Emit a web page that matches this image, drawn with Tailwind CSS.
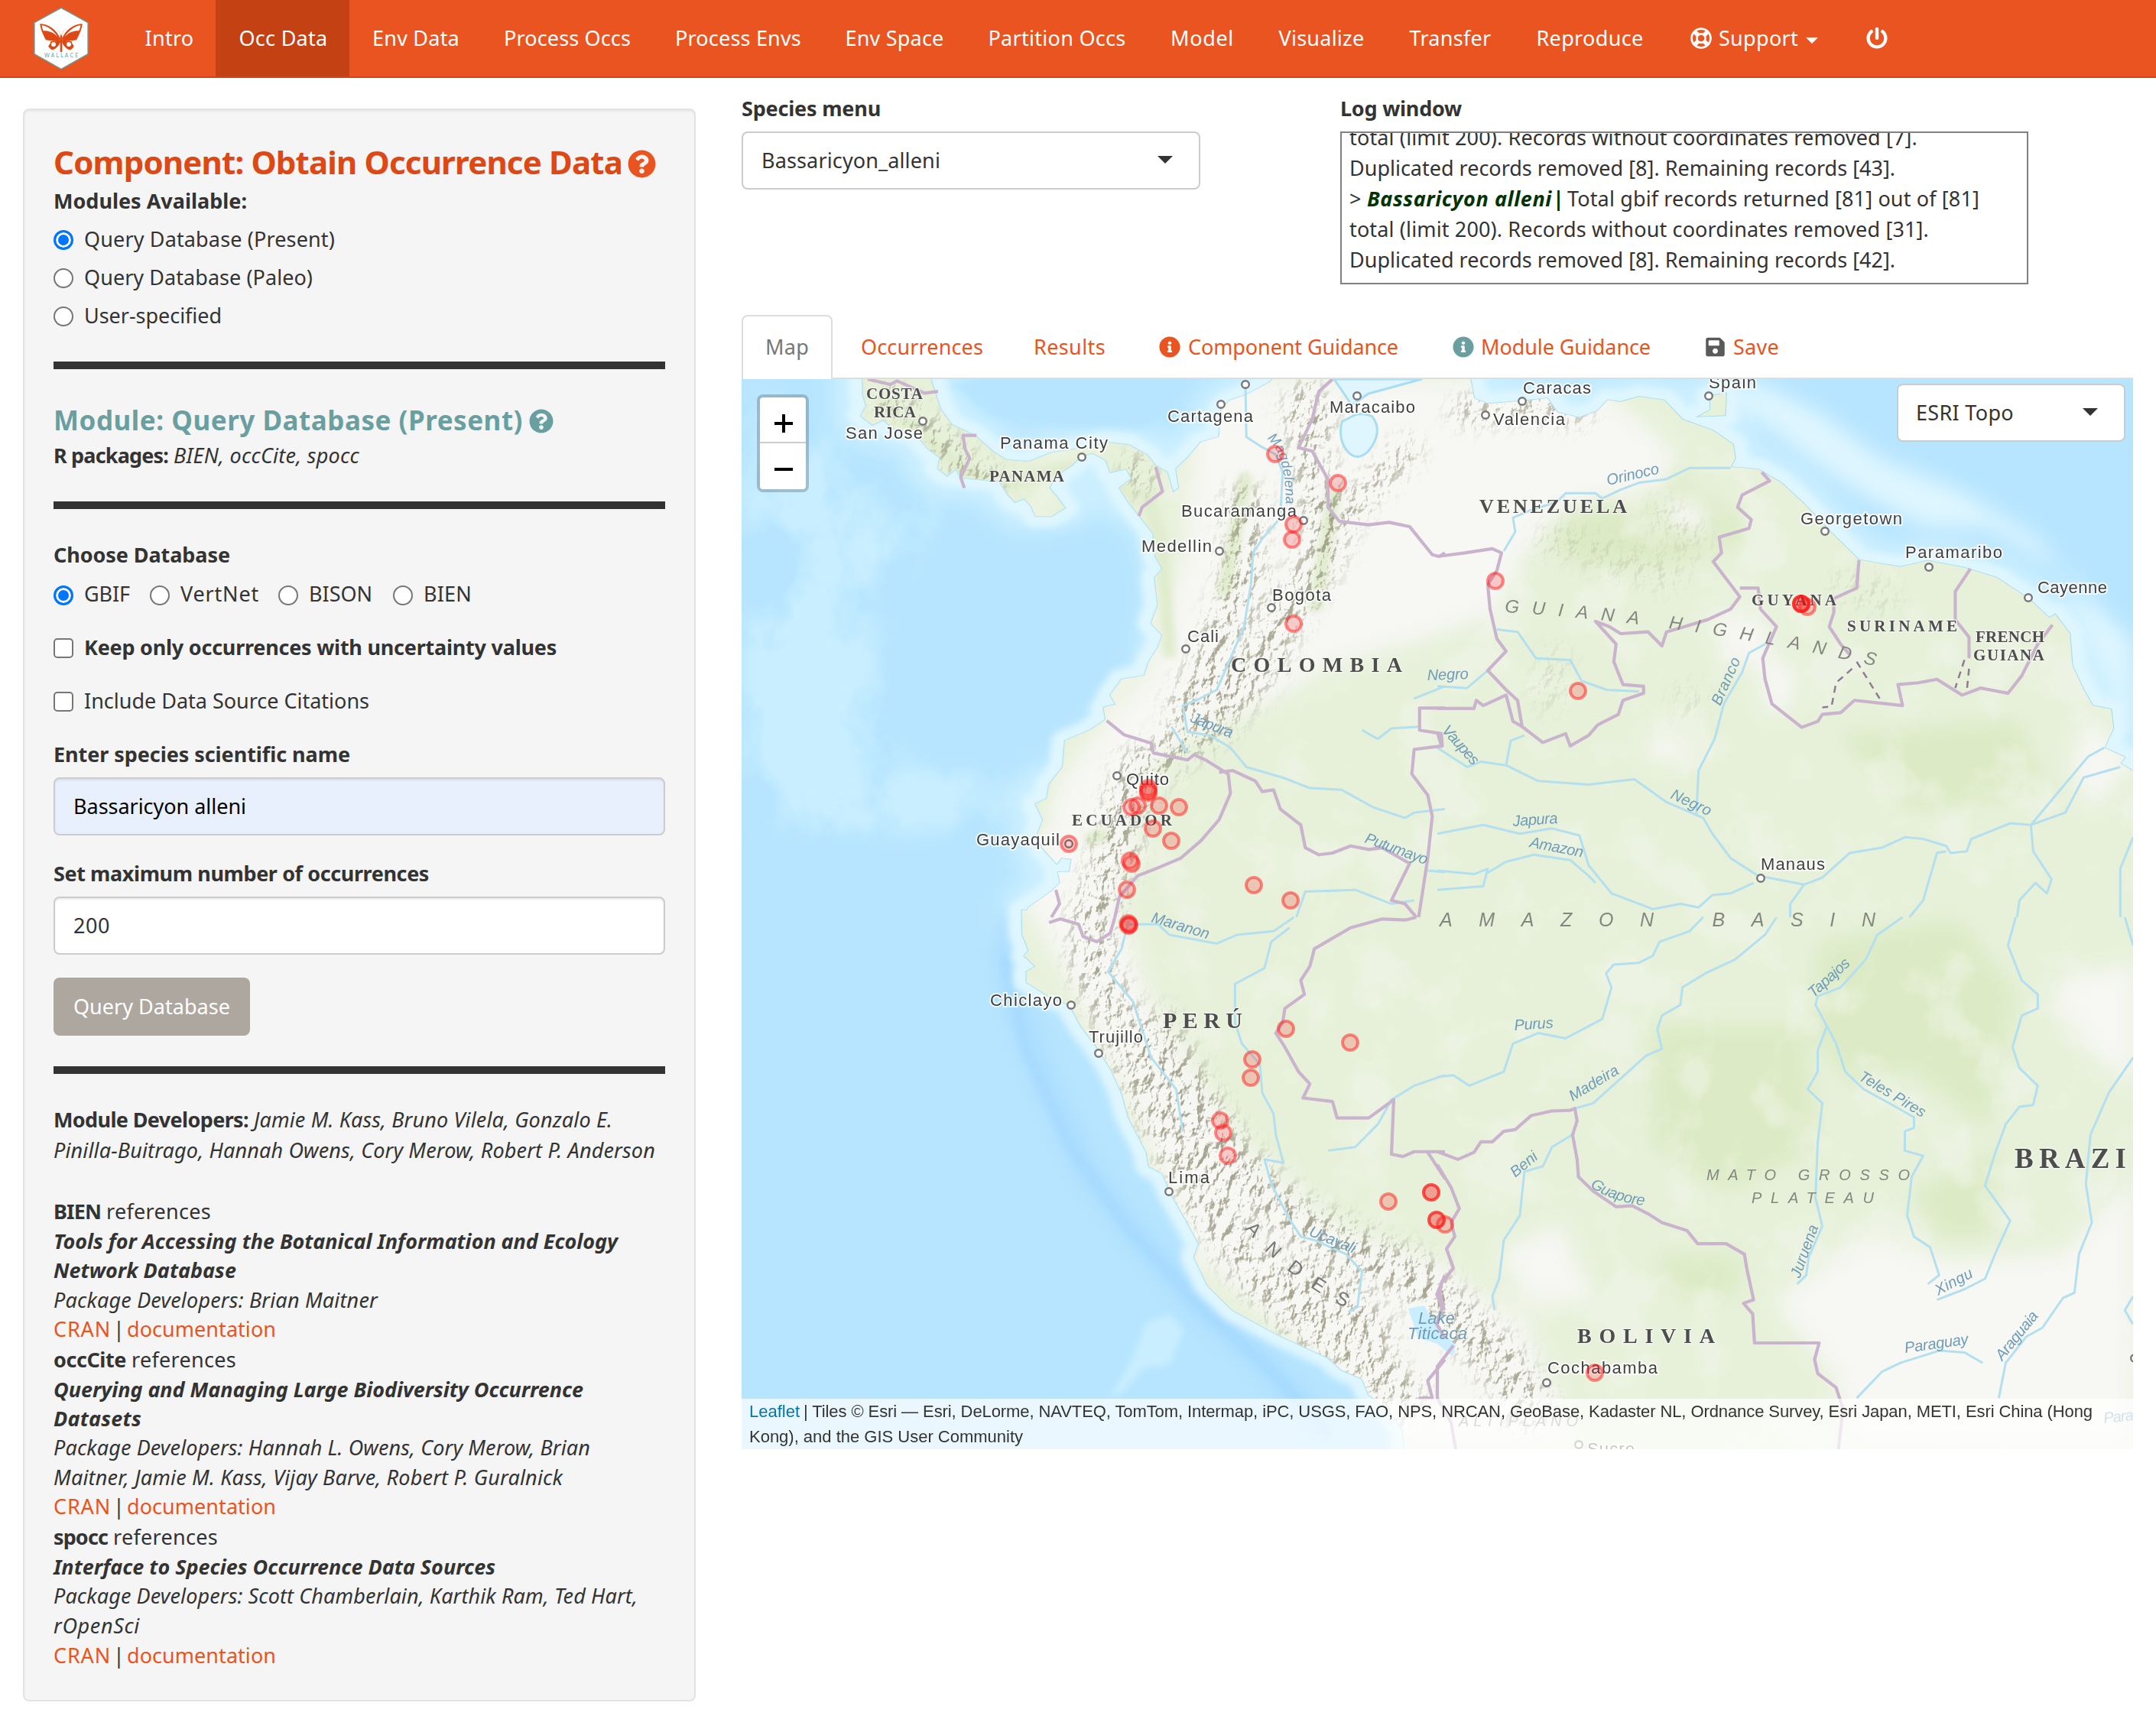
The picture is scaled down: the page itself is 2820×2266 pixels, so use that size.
<!DOCTYPE html>
<html lang="en">
<head>
<meta charset="utf-8">
<title>Wallace</title>
<script src="https://cdn.jsdelivr.net/npm/@tailwindcss/browser@4"></script>
</head>
<body class="w-[2820px] h-[2266px] overflow-hidden bg-white text-[#333] text-[27px] leading-[40px] font-['Noto_Sans',sans-serif]">
<svg class="hidden">
  <symbol id="question" viewBox="0 0 512 512"><path fill="currentColor" d="M504 256c0 136.997-111.043 248-248 248S8 392.997 8 256C8 119.083 119.043 8 256 8s248 111.083 248 248zM262.655 90c-54.497 0-89.255 22.957-116.549 63.758-3.536 5.286-2.353 12.415 2.715 16.258l34.699 26.31c5.205 3.947 12.621 3.008 16.665-2.122 17.864-22.658 30.113-35.797 57.303-35.797 20.429 0 45.698 13.148 45.698 32.958 0 14.976-12.363 22.667-32.534 33.976C247.128 238.528 216 254.941 216 296v4c0 6.627 5.373 12 12 12h56c6.627 0 12-5.373 12-12v-1.333c0-28.462 83.186-29.647 83.186-106.667 0-58.002-60.165-102-116.531-102zM256 338c-25.365 0-46 20.635-46 46 0 25.364 20.635 46 46 46s46-20.636 46-46c0-25.365-20.635-46-46-46z"/></symbol>
  <symbol id="info" viewBox="0 0 512 512"><path fill="currentColor" d="M256 8C119.043 8 8 119.083 8 256c0 136.997 111.043 248 248 248s248-111.003 248-248C504 119.083 392.957 8 256 8zm0 110c23.196 0 42 18.804 42 42s-18.804 42-42 42-42-18.804-42-42 18.804-42 42-42zm56 254c0 6.627-5.373 12-12 12h-88c-6.627 0-12-5.373-12-12v-24c0-6.627 5.373-12 12-12h12v-64h-12c-6.627 0-12-5.373-12-12v-24c0-6.627 5.373-12 12-12h64c6.627 0 12 5.373 12 12v100h12c6.627 0 12 5.373 12 12v24z"/></symbol>
</svg>

<header class="h-[102px] flex bg-[#E95420] border-b-2 border-[#d34615] text-white leading-[100px]">
  <svg class="ml-[30px] w-[100px] h-[100px] shrink-0" viewBox="0 0 300 300">
    <path d="M150 31L255 89V212L150 271L45 212V89Z" fill="#fff" stroke="#6a9fa1" stroke-width="4"/>
    <path d="M147 152C132 116 100 94 67 93C68 112 77 132 90 157C110 161 130 160 146 158ZM153 152C168 116 200 94 233 93C232 112 223 132 210 157C190 161 170 160 154 158Z" fill="#dd4814"/>
    <path d="M74 99C102 104 124 124 137 146C120 126 102 121 80 121C77 113 74 106 74 99ZM226 99C198 104 176 124 163 146C180 126 198 121 220 121C223 113 226 106 226 99Z" fill="#fff"/>
    <path d="M147 159C130 159 112 160 107 164C112 170 99 176 100 184C106 188 109 196 116 196C130 192 141 180 147 164ZM153 159C170 159 188 160 193 164C188 170 201 176 200 184C194 188 191 196 184 196C170 192 159 180 153 164Z" fill="#dd4814"/>
    <circle cx="120" cy="174" r="9" fill="#fff"/><circle cx="180" cy="174" r="9" fill="#fff"/>
    <path d="M150 140V201" stroke="#dd4814" stroke-width="8" stroke-linecap="round"/>
    <path d="M149 140Q145 120 130 112M151 140Q155 120 170 112" stroke="#f3c5b2" stroke-width="2" fill="none"/>
    <text x="84" y="224" font-size="20" textLength="132" font-family="Lato, sans-serif" fill="#6a9fa1">WALLACE</text>
  </svg>
  <nav class="ml-[29px] flex h-[100px] whitespace-nowrap text-center">
    <a class="w-[123px] pl-[2px]"><span data-w="64">Intro</span></a>
    <a class="w-[175px] pl-[2px] bg-[#c34113]"><span data-w="116">Occ Data</span></a>
    <a class="w-[172px] pl-[2px]"><span data-w="114">Env Data</span></a>
    <a class="w-[224px] pl-[2px]"><span data-w="166">Process Occs</span></a>
    <a class="w-[223px] pl-[2px]"><span data-w="165">Process Envs</span></a>
    <a class="w-[186px] pl-[2px]"><span data-w="129">Env Space</span></a>
    <a class="w-[239px] pl-[2px]"><span data-w="180">Partition Occs</span></a>
    <a class="w-[141px] pl-[2px]"><span data-w="83">Model</span></a>
    <a class="w-[171px] pl-[2px]"><span data-w="112">Visualize</span></a>
    <a class="w-[166px] pl-[2px]"><span data-w="107">Transfer</span></a>
    <a class="w-[199px] pl-[2px]"><span data-w="140">Reproduce</span></a>
    <a class="pl-[33px] w-[232px] flex items-center">
      <svg class="w-7 h-7 shrink-0" viewBox="0 0 28 28" fill="none" stroke="#fff"><circle cx="14" cy="14" r="12.4" stroke-width="2.8"/><circle cx="14" cy="14" r="5.6" stroke-width="2.6"/><path d="M5 5L10 10M23 5L18 10M5 23L10 18M23 23L18 18" stroke-width="5.5"/></svg>
      <span class="ml-[9px]" data-w="104">Support</span>
      <svg class="ml-[10px] mt-[6px] w-4 h-2 shrink-0" viewBox="0 0 16 8"><path d="M0 0H16L8 8Z" fill="#fff"/></svg>
    </a>
    <a class="pl-[31px] flex items-center"><svg class="w-7 h-7" viewBox="0 0 512 512"><path fill="#fff" d="M400 54.1c63 45 104 118.6 104 201.9 0 136.8-110.8 247.7-247.5 248C120 504.3 8.2 393 8 256.4 7.9 173.1 48.9 99.3 111.8 54.2c11.7-8.3 28-4.8 35 7.7L162.6 90c5.9 10.5 3.1 23.8-6.6 31-41.5 30.8-68 79.6-68 134.9-.1 92.3 74.5 168.1 168 168.1 91.6 0 168.6-74.2 168-169.1-.3-51.8-24.7-101.8-68.1-134-9.7-7.2-12.4-20.5-6.5-30.9l15.8-28.1c7-12.4 23.2-16.1 34.8-7.8zM296 264V24c0-13.3-10.7-24-24-24h-32c-13.3 0-24 10.7-24 24v240c0 13.3 10.7 24 24 24h32c13.3 0 24-10.7 24-24z"/></svg></a>
  </nav>
</header>

<div class="flex">
<aside class="ml-[30px] mt-10 w-[880px] h-[2084px] shrink-0 border-2 border-[#e3e3e3] rounded-[8px] bg-[#f5f5f5] shadow-[inset_0_2px_2px_rgba(0,0,0,0.05)] pt-[44px] px-[38px] whitespace-nowrap">
  <h1 class="flex items-center h-12 leading-[48px] text-[42px] font-bold text-[#dd4814]"><span data-w="744">Component: Obtain Occurrence Data</span><svg class="ml-[7px] mt-1 w-[37px] h-[37px] shrink-0 text-[#E95420]"><use href="#question"/></svg></h1>
  <div class="mt-[7px] font-bold"><span data-w="253">Modules Available:</span></div>
  <div class="mt-[10px] flex flex-col gap-[10px]">
    <label class="flex items-center gap-[14px]"><input type="radio" class="appearance-none shrink-0 mt-[2px] size-[26px] rounded-full border-[3px] border-[#0075ff] bg-[#0075ff] shadow-[inset_0_0_0_3px_white]"><span data-w="328">Query Database (Present)</span></label>
    <label class="flex items-center gap-[14px]"><input type="radio" class="appearance-none shrink-0 mt-[2px] size-[26px] rounded-full border-2 border-[#767676] bg-white"><span data-w="299">Query Database (Paleo)</span></label>
    <label class="flex items-center gap-[14px]"><input type="radio" class="appearance-none shrink-0 mt-[2px] size-[26px] rounded-full border-2 border-[#767676] bg-white"><span data-w="180">User-specified</span></label>
  </div>
  <div class="mt-[40px] h-[10px] bg-[#333]"></div>
  <h2 class="mt-[47px] flex items-center h-10 text-[35px] font-bold text-[#6a9fa1]"><span data-w="614">Module: Query Database (Present)</span><svg class="ml-[8px] mt-[2px] w-8 h-8 shrink-0"><use href="#question"/></svg></h2>
  <div class="mt-[6px] flex gap-[7px]"><b><span data-w="150">R packages:</span></b><i><span data-w="243">BIEN, occCite, spocc</span></i></div>
  <div class="mt-[40px] h-[10px] bg-[#333]"></div>
  <div class="mt-[40px] font-bold"><span data-w="231">Choose Database</span></div>
  <div class="mt-[11px] flex">
    <label class="flex items-center gap-[14px] w-[126px]"><input type="radio" class="appearance-none shrink-0 mt-1 size-[26px] rounded-full border-[3px] border-[#0075ff] bg-[#0075ff] shadow-[inset_0_0_0_3px_white]"><span data-w="60">GBIF</span></label>
    <label class="flex items-center gap-[14px] w-[168px]"><input type="radio" class="appearance-none shrink-0 mt-1 size-[26px] rounded-full border-2 border-[#767676] bg-white"><span data-w="103">VertNet</span></label>
    <label class="flex items-center gap-[14px] w-[150px]"><input type="radio" class="appearance-none shrink-0 mt-1 size-[26px] rounded-full border-2 border-[#767676] bg-white"><span data-w="83">BISON</span></label>
    <label class="flex items-center gap-[14px]"><input type="radio" class="appearance-none shrink-0 mt-1 size-[26px] rounded-full border-2 border-[#767676] bg-white"><span data-w="63">BIEN</span></label>
  </div>
  <label class="mt-[30px] flex items-center gap-[14px] font-bold"><input type="checkbox" class="appearance-none shrink-0 mt-[2px] size-[26px] rounded-[5px] border-2 border-[#767676] bg-white"><span data-w="618">Keep only occurrences with uncertainty values</span></label>
  <label class="mt-[30px] flex items-center gap-[14px]"><input type="checkbox" class="appearance-none shrink-0 mt-[2px] size-[26px] rounded-[5px] border-2 border-[#767676] bg-white"><span data-w="373">Include Data Source Citations</span></label>
  <div class="mt-[30px] font-bold"><span data-w="388">Enter species scientific name</span></div>
  <div class="mt-[10px] h-[76px] border-2 border-[#ccc] rounded-[8px] bg-[#e8f0fe] shadow-[inset_0_2px_2px_rgba(0,0,0,0.075)] pl-6 leading-[72px] text-black"><span data-w="226">Bassaricyon alleni</span></div>
  <div class="mt-[30px] font-bold"><span data-w="491">Set maximum number of occurrences</span></div>
  <div class="mt-[10px] h-[76px] border-2 border-[#ccc] rounded-[8px] bg-white shadow-[inset_0_2px_2px_rgba(0,0,0,0.075)] pl-6 leading-[72px]"><span data-w="48">200</span></div>
  <div class="mt-[30px] w-[257px] h-[76px] rounded-[8px] bg-[#aea79f] pl-[26px] leading-[76px] text-white"><span data-w="205">Query Database</span></div>
  <div class="mt-10 h-[10px] bg-[#333]"></div>
  <div class="mt-10 flex gap-[7px]"><b><span data-w="255">Module Developers:</span></b><i><span data-w="469">Jamie M. Kass, Bruno Vilela, Gonzalo E.</span></i></div>
  <div><i><span data-w="787">Pinilla-Buitrago, Hannah Owens, Cory Merow, Robert P. Anderson</span></i></div>

  <div class="mt-10 flex gap-[7px]"><b><span data-w="62">BIEN</span></b><span data-w="137">references</span></div>
  <div class="leading-[38.4px]">
    <div class="font-bold italic"><span data-w="738">Tools for Accessing the Botanical Information and Ecology</span></div>
    <div class="font-bold italic"><span data-w="239">Network Database</span></div>
    <div class="italic"><span data-w="424">Package Developers: Brian Maitner</span></div>
    <div class="flex"><a class="w-[78px] text-[#E95420]"><span data-w="75">CRAN</span></a><span class="w-[18px]">|</span><a class="text-[#E95420]"><span data-w="195">documentation</span></a></div>
  </div>
  <div class="flex gap-[7px]"><b><span data-w="95">occCite</span></b><span data-w="137">references</span></div>
  <div class="leading-[38.4px]">
    <div class="font-bold italic"><span data-w="693">Querying and Managing Large Biodiversity Occurrence</span></div>
    <div class="font-bold italic"><span data-w="115">Datasets</span></div>
    <div class="italic"><span data-w="702">Package Developers: Hannah L. Owens, Cory Merow, Brian</span></div>
    <div class="italic"><span data-w="666">Maitner, Jamie M. Kass, Vijay Barve, Robert P. Guralnick</span></div>
    <div class="flex"><a class="w-[78px] text-[#E95420]"><span data-w="75">CRAN</span></a><span class="w-[18px]">|</span><a class="text-[#E95420]"><span data-w="195">documentation</span></a></div>
  </div>
  <div class="flex gap-[7px]"><b><span data-w="71">spocc</span></b><span data-w="137">references</span></div>
  <div class="leading-[38.7px]">
    <div class="font-bold italic"><span data-w="578">Interface to Species Occurrence Data Sources</span></div>
    <div class="italic"><span data-w="764">Package Developers: Scott Chamberlain, Karthik Ram, Ted Hart,</span></div>
    <div class="italic"><span data-w="113">rOpenSci</span></div>
    <div class="flex"><a class="w-[78px] text-[#E95420]"><span data-w="75">CRAN</span></a><span class="w-[18px]">|</span><a class="text-[#E95420]"><span data-w="195">documentation</span></a></div>
  </div>
</aside>

<main class="ml-[60px] w-[1820px] whitespace-nowrap">
  <div class="flex h-[310px] pt-[20px]">
    <div class="w-[783px]">
      <div class="font-bold"><span data-w="182">Species menu</span></div>
      <div class="mt-[10px] w-[600px] h-[76px] flex justify-between border-2 border-[#ccc] rounded-[8px] pl-6 pr-[34px] leading-[72px]"><span data-w="234">Bassaricyon_alleni</span><svg class="mt-[30px] w-5 h-[10px]" viewBox="0 0 20 10"><path d="M0 0H20L10 10Z" fill="#333"/></svg></div>
    </div>
    <div>
      <div class="font-bold"><span data-w="159">Log window</span></div>
      <div class="mt-[10px] w-[900px] h-[200px] overflow-hidden border-2 border-[#808080] pl-[10px]">
        <div class="-mt-[14px]"><span data-w="743">total (limit 200). Records without coordinates removed [7].</span></div>
        <div><span data-w="714">Duplicated records removed [8]. Remaining records [43].</span></div>
        <div class="flex"><span class="w-[23px]" data-w="16">&gt;</span><b class="text-[#003300] flex"><i class="w-[243px]"><span data-w="242">Bassaricyon alleni</span></i><span class="w-[19px]">|</span></b><span data-w="539">Total gbif records returned [81] out of [81]</span></div>
        <div><span data-w="758">total (limit 200). Records without coordinates removed [31].</span></div>
        <div><span data-w="714">Duplicated records removed [8]. Remaining records [42].</span></div>
      </div>
    </div>
  </div>
  <div class="flex h-[84px] border-b-2 border-[#ddd] text-[#E95420] leading-[83px]">
    <div class="w-[119px] h-[84px] border-2 border-b-0 border-[#ddd] rounded-t-[8px] bg-white text-[#777] pl-[29px] leading-[79px]"><span data-w="57">Map</span></div>
    <div class="pl-[37px]"><span data-w="160">Occurrences</span></div>
    <div class="pl-[66px]"><span data-w="94">Results</span></div>
    <div class="pl-[70px] flex"><svg class="mt-[28px] w-7 h-7"><use href="#info"/></svg><span class="ml-[10px]" data-w="275">Component Guidance</span></div>
    <div class="pl-[71px] flex"><svg class="mt-[28px] w-7 h-7 text-[#6a9fa1]"><use href="#info"/></svg><span class="ml-[9px]" data-w="222">Module Guidance</span></div>
    <div class="pl-[72px] flex"><svg class="mt-[28px] w-[25px] h-7" viewBox="0 0 448 512"><path fill="#5a5a5a" d="M433.941 129.941l-83.882-83.882A48 48 0 0 0 316.118 32H48C21.49 32 0 53.49 0 80v352c0 26.51 21.49 48 48 48h352c26.51 0 48-21.49 48-48V163.882a48 48 0 0 0-14.059-33.941zM224 416c-35.346 0-64-28.654-64-64 0-35.346 28.654-64 64-64s64 28.654 64 64c0 35.346-28.654 64-64 64zm96-304.52V212c0 6.627-5.373 12-12 12H76c-6.627 0-12-5.373-12-12V108c0-6.627 5.373-12 12-12h228.52c3.183 0 6.235 1.264 8.485 3.515l3.48 3.48A11.996 11.996 0 0 1 320 111.48z"/></svg><span class="ml-[11px]" data-w="60">Save</span></div>
  </div>

  <div class="relative w-[1820px] h-[1400px] overflow-hidden">
    <svg class="block w-[1820px] h-[1400px]" viewBox="970 496 1820 1400">
      <defs>
        <path id="landNW" transform="translate(960 480) scale(.5931 .4592)" d="M283 20L285 80L292 110L280 140L305 165L330 150L350 175L400 190L430 235L455 258L450 290L470 310L490 290L500 315L585 325L605 365L620 385L640 375L655 395L665 425L700 425L730 402L712 370L695 345L710 310L745 280L765 255L790 245L820 265L830 300L865 290L878 318L850 345L870 385L895 425L925 475L930 540L945 575L928 600L935 680L920 730L945 765L935 800L915 840L905 880L855 890L830 935L842 962L815 970L820 1005L785 1035L730 1065L725 1140L695 1190L690 1230L665 1245L682 1290L670 1330L680 1370L712 1415L722 1398L745 1402L740 1440L715 1440L720 1470L700 1495L650 1540L635 1580L1600 1580V20H1200L1180 45L1130 80L1095 95L1075 120L1070 200L1030 215L1000 260L975 290L982 345L968 358L955 300L930 282L910 250L870 222L820 215L770 230L700 245L650 270L600 265L570 240L530 195L480 165L455 120L440 60L430 20Z"/>
        <path id="landSW" transform="translate(960 1200) scale(.5931 .4592)" d="M635 -20L636 50L650 95L640 110L665 140L645 155L645 185L700 230L740 250L765 310L800 370L830 430L855 500L870 570L910 670L915 710L945 730L965 790L1000 870L1025 930L1015 970L1045 1050L1100 1120L1200 1190L1310 1255L1340 1290L1385 1315L1400 1360L1440 1400L1475 1460L1480 1530L1600 1530V-20Z"/>
        <path id="landNE" transform="translate(1880 480) scale(.5995 .4592)" d="M-20 20H70L80 90L110 105L180 98L240 90L262 130L310 145L350 125L372 95L400 100L440 85L495 95L535 150L600 180L645 220L650 260L640 285L700 292L750 330L800 390L850 460L920 550L1010 570L1070 552L1150 572L1220 600L1290 660L1335 715L1348 705L1380 760L1385 850L1410 920L1430 965L1470 975L1475 1030L1455 1085L1500 1112L1490 1130L1530 1160V1600H-20ZM595 82L630 75L628 138L570 141L596 122Z"/>
        <path id="landSE" transform="translate(1880 1200) scale(.5995 .4592)" d="M-20 -20H1540V1540H-20Z"/>
        <clipPath id="land"><use href="#landNW"/><use href="#landSW"/><use href="#landNE"/><use href="#landSE"/></clipPath>
        <filter id="b6" x="-20%" y="-20%" width="140%" height="140%"><feGaussianBlur stdDeviation="5"/></filter>
        <filter id="b14" x="-20%" y="-20%" width="140%" height="140%"><feGaussianBlur stdDeviation="14"/></filter>
        <filter id="relief" x="0" y="0" width="100%" height="100%" color-interpolation-filters="sRGB">
          <feTurbulence type="fractalNoise" baseFrequency=".07 .05" numOctaves="4" seed="8"/>
          <feDiffuseLighting surfaceScale="12" lighting-color="#fff"><feDistantLight azimuth="225" elevation="50"/></feDiffuseLighting>
          <feColorMatrix values="0 0 0 0 .55  0 0 0 0 .54  0 0 0 0 .44  -2 0 0 0 1.1"/>
        </filter>
        <filter id="mottle" x="0" y="0" width="100%" height="100%" color-interpolation-filters="sRGB">
          <feTurbulence type="fractalNoise" baseFrequency=".012" numOctaves="5" seed="3"/>
          <feColorMatrix values="0 0 0 0 .97  0 0 0 0 .97  0 0 0 0 .95  5 0 0 0 -2.65"/>
        </filter>
        <filter id="seabed" x="0" y="0" width="100%" height="100%" color-interpolation-filters="sRGB">
          <feTurbulence type="fractalNoise" baseFrequency=".008 .006" numOctaves="5" seed="21"/>
          <feColorMatrix values="0 0 0 0 .79  0 0 0 0 .935  0 0 0 0 1  5 0 0 0 -1.8"/>
        </filter>
        <mask id="shelf" maskUnits="userSpaceOnUse" x="970" y="496" width="1820" height="1400"><path d="M970 500L1100 560L1240 640L1200 720L1160 840L1180 1000L1330 1020L1300 1080L1080 1100L970 1060Z" fill="#fff" filter="url(#b14)"/></mask>
        <mask id="ranges" maskUnits="userSpaceOnUse" x="970" y="496" width="1820" height="1400">
          <g fill="none" stroke="#fff" stroke-linejoin="round" filter="url(#b14)">
            <path stroke-width="30" d="M1150 510L1190 540L1230 580L1270 615L1310 640M1480 600L1500 640"/>
            <path stroke-width="50" d="M1700 520L1720 620L1735 720L1690 790L1640 880L1580 950L1500 1000M1630 640L1625 760L1580 880L1545 940"/>
            <path stroke-width="30" d="M1745 700L1790 640L1850 580M1900 540L2010 530L2080 540M1700 500L1740 560"/>
            <path stroke-width="56" d="M1500 990L1470 1060L1455 1130L1430 1200L1430 1260L1460 1330L1500 1420L1545 1510L1590 1590L1640 1660L1720 1740L1800 1790L1850 1850"/>
            <path stroke-width="60" d="M1500 1330L1560 1440L1620 1530L1700 1600L1780 1640L1850 1670L1900 1720L1960 1780L2010 1860"/>
            <path stroke-width="50" d="M1680 1660L1760 1700L1810 1760"/>
            <path stroke="#444" stroke-width="40" d="M2010 700L2080 720L2200 760M2040 850L2020 930M2230 720L2160 660M2200 900L2215 930M2400 760L2480 790"/>
          </g>
        </mask>
      </defs>

      <rect x="970" y="496" width="1820" height="1400" fill="#b7e5ff"/>
      <g mask="url(#shelf)"><rect x="970" y="496" width="640" height="760" filter="url(#seabed)"/></g>
      <g fill="#cdf0ff" stroke="#cdf0ff" stroke-width="130" stroke-linejoin="round" filter="url(#b14)"><use href="#landNW"/><use href="#landNE"/></g>
      <path d="M1255 740L1350 700L1480 690L1500 780L1480 880L1380 1000L1290 1000L1200 980L1150 880L1170 780Z" fill="#b7e5ff" filter="url(#b14)"/>
      <path d="M2790 600L2650 560L2600 620L2540 560L2460 540L2380 540L2340 490H2790V840L2730 800L2680 720Z" fill="#b7e5ff" filter="url(#b6)"/>
      <path d="M1240 500H1500L1560 500L1500 560L1400 560L1300 545Z" fill="#b7e5ff" filter="url(#b6)"/>
      <path d="M1312 1190L1322 1290L1365 1410L1420 1530L1490 1620L1570 1710L1660 1790L1740 1880" fill="none" stroke="#a6daff" stroke-width="22" filter="url(#b14)"/>
      <path d="M1315 1250L1340 1370L1400 1500L1470 1600L1570 1710L1660 1790L1740 1880" fill="none" stroke="#a6daff" stroke-width="12" filter="url(#b6)"/>
      <g fill="#dff6ff" stroke="#dff6ff" stroke-width="60" stroke-linejoin="round" filter="url(#b6)"><use href="#landNW"/><use href="#landSW"/><use href="#landNE"/></g>
      <path d="M2380 610L2440 650L2520 690L2600 690L2700 750L2740 860L2790 960V840L2730 780L2660 700L2560 640L2460 600L2380 540L2300 500L2260 520Z" fill="#dff6ff" filter="url(#b14)"/>
      <path d="M1530 1720L1548 1740L1530 1785L1495 1790L1470 1820L1450 1830L1480 1780L1500 1730Z" fill="#c9eeff" filter="url(#b6)"/>
      <g stroke="#a9def2" stroke-width="4" fill="#e8f1dc"><use href="#landNW"/><use href="#landSW"/><use href="#landNE"/></g>

      <g clip-path="url(#land)">
        <rect x="970" y="496" width="1820" height="1400" fill="#e7f1da"/>
        <g filter="url(#b14)" fill="#dcebc6">
          <path d="M1980 660L2200 620L2300 700L2180 740L2060 740Z"/><path d="M2380 1230L2560 1200L2640 1300L2600 1480L2500 1400L2420 1420L2360 1340Z"/><path d="M2160 1340L2360 1340L2380 1500L2260 1560L2160 1500Z"/><path d="M2500 1560L2620 1500L2600 1620L2540 1620Z"/><path d="M2400 960L2640 940L2680 1040L2500 1060Z"/><path d="M2160 1640L2280 1640L2270 1700L2200 1700Z"/>
        </g>
        <rect x="970" y="496" width="1820" height="1400" filter="url(#mottle)" opacity=".4"/>
        <g filter="url(#b14)" fill="#f7f7f4" stroke="#f7f7f4">
          <path d="M1560 496H2080L2180 580L2180 640L2060 660L1990 730L1960 800L1880 830L1740 870L1660 920L1560 960L1500 1010L1470 1180L1400 1240L1340 1180L1400 1000L1500 880L1550 720L1560 600Z"/>
          <path d="M1340 1180L1470 1200L1500 1300L1580 1430L1660 1540L1760 1610L1880 1650L2000 1740L2060 1896H1830L1700 1760L1560 1640L1460 1400Z"/>
          <path d="M2230 800L2310 810L2320 880L2260 860ZM2300 870L2350 870L2340 930L2310 930ZM2490 900L2500 920L2480 940ZM2150 960L2190 970L2200 1000L2160 990ZM2730 930L2780 1000L2740 1060L2710 1010ZM2680 1290L2790 1260V1420L2740 1380ZM2160 660L2220 650L2240 700L2190 690ZM1960 1640L2040 1600L2080 1700L2000 1700Z"/>
          <path d="M2320 1700L2440 1620L2560 1650L2700 1640L2790 1540V1896H2420L2400 1800Z"/>
        </g>
        <path d="M1500 640L1520 720L1530 860M1420 1100L1450 1090M1150 520L1230 590L1300 640L1400 610L1490 650M1630 620L1600 780M1745 640L1720 800" stroke="#e0ecce" stroke-width="18" fill="none" filter="url(#b6)"/>
        <g mask="url(#ranges)"><rect x="970" y="496" width="1820" height="1400" filter="url(#relief)" opacity=".75"/></g>
      </g>
      <path d="M1755 552Q1750 575 1762 590Q1775 605 1790 590Q1810 565 1795 545Q1780 538 1768 545ZM1745 496L1768 530L1790 515L1860 496Z" fill="#dff6ff" stroke="#a9def2" stroke-width="3"/>
      <path d="M1842 1712L1862 1708L1880 1735L1904 1760L1900 1775L1880 1758L1855 1750Z" fill="#c9eeff"/>

      <!-- rivers -->
      <g fill="none" stroke="#b3dfee" stroke-width="3" stroke-linejoin="round">
        <g transform="translate(960 480) scale(.5931 .4592)">
          <path vector-effect="non-scaling-stroke" d="M1128 60L1130 200L1160 225L1195 250L1210 300L1205 430L1165 490L1145 530L1140 620L1125 740L1095 830L1065 920L1020 950L990 965L1000 1040L1050 1050L1095 1085L1130 1140L1210 1170L1270 1200L1340 1205L1410 1255L1480 1285L1500 1270L1568 1260"/>
          <path vector-effect="non-scaling-stroke" d="M965 1025L1000 1100M1385 1035L1420 1060L1450 1030L1510 1025M1500 945L1568 910M1568 1440L1530 1435M1450 1530L1370 1490L1260 1495L1240 1568M1450 1530L1500 1520"/>
        </g>
        <g transform="translate(1880 480) scale(.5995 .4592)">
          <path vector-effect="non-scaling-stroke" d="M640 288H550L500 320L440 330L400 350L360 375L345 360L280 360L260 385L200 410L165 430L170 470L145 525M130 748L175 755L215 830L290 835L315 895L370 920L440 925M0 910L65 915L115 860M0 1085L65 1140L95 1125L150 1135L160 1065L190 1050M150 1135L220 1180L330 1190L430 1175L500 1240L580 1285L600 1330L640 1400L700 1450L800 1475L840 1455L900 1385L970 1370L1020 1340L1060 1345L1110 1365L1120 1385L1155 1380L1165 1345L1250 1300L1295 1305L1370 1270L1410 1170L1490 1140M1295 1305L1420 1110L1455 1085M1295 1305L1300 1380L1340 1460L1330 1500L1305 1470L1270 1520L1265 1568"/>
          <path vector-effect="non-scaling-stroke" d="M715 790L680 815L665 870L625 960L605 1060L570 1150L565 1280M0 1330L100 1305L180 1330L250 1315L310 1335L330 1420L380 1500L470 1545L530 1530L570 1540L600 1505L640 1500L690 1470M0 1435L80 1445L110 1430L100 1480L0 1490M105 1445L150 1410L210 1390L290 1405L330 1450L345 1470M800 1475L770 1530V1568M1110 1380L1090 1385L1060 1520L1030 1568M1518 1340L1490 1430V1568"/>
        </g>
        <g transform="translate(960 1200) scale(.5931 .4592)">
          <path vector-effect="non-scaling-stroke" d="M870 20L935 20L960 50L1065 75L1110 50L1190 40L1235 0M1225 30L1185 70L1170 145L1105 190L1105 300L1120 360L1160 420L1165 500L1190 560L1195 620L1212 700L1170 690L1185 760L1225 860L1250 910L1280 920L1350 960L1385 1010L1375 1110L1355 1125"/>
          <path vector-effect="non-scaling-stroke" d="M870 10L855 90L825 155L880 240L900 320L920 400L975 490L990 610M1310 665L1370 655L1420 590L1450 520L1500 480L1568 450"/>
        </g>
        <g transform="translate(1880 1200) scale(.5995 .4592)">
          <path vector-effect="non-scaling-stroke" d="M580 0L550 40L485 70L470 110L440 130L385 135L368 160L380 200L360 290L280 345L220 330L165 360L145 440L70 480L35 450L0 455M740 0L715 50L650 120L585 160L535 200L530 250L490 280L480 320L490 375L455 395L400 460L340 530L300 545M300 615L250 655L230 710L190 725L180 850L145 920L135 1030L120 1080L125 1120"/>
          <path vector-effect="non-scaling-stroke" d="M1015 0L960 50L935 120L880 200L830 225L825 250L850 310L870 360L890 440L930 490L1000 540L1040 570V600L1020 610V665L1060 680L1035 740L1025 850L1040 910L1075 940L1095 1020L1070 1045M850 310L830 380V440L808 490L840 530L830 640L825 800L840 880L810 970L805 1020L785 1045"/>
          <path vector-effect="non-scaling-stroke" d="M1262 0L1245 80L1275 180L1310 220L1310 260L1275 280L1255 370L1270 430L1310 480L1300 535L1270 540L1240 590L1215 680L1195 765L1250 865L1220 950L1195 1030L1150 1060L1090 1090M1518 400L1465 500L1425 620L1415 760L1428 870L1400 960L1390 1070L1365 1085L1320 1170L1285 1195L1240 1270L1225 1370M1190 1270L1150 1240L1095 1235L1010 1270L970 1295L915 1370M1500 0L1518 80M1518 1080L1500 1120L1518 1160"/>
        </g>
      </g>

      <!-- borders -->
      <g fill="none" stroke="#cab3cd" stroke-width="4.2" stroke-linejoin="round">
        <g transform="translate(960 480) scale(.5931 .4592)">
          <path vector-effect="non-scaling-stroke" d="M295 35L345 50L360 40L420 75L450 70M535 195L505 195L510 235L520 260L500 315L508 345M930 285L945 355L915 385L900 400L893 425M1320 35L1290 70L1275 150L1245 230L1275 240L1310 320L1310 400L1335 440L1400 450L1445 443L1490 455L1540 535L1555 540L1568 530"/>
          <path vector-effect="non-scaling-stroke" d="M822 1008L860 1048L920 1072L925 1100L1000 1120L1015 1105L1040 1120L1090 1160L1095 1215L1070 1290L1030 1350L985 1400L930 1430L890 1450L850 1510L840 1568M1070 1155L1100 1150L1150 1180L1165 1210L1190 1205L1205 1260L1250 1305L1260 1370L1290 1390L1320 1385L1360 1365L1400 1375L1430 1370L1490 1415L1450 1520L1480 1530L1505 1568M1568 972H1512V1035L1560 1045L1562 1080L1500 1090L1495 1160L1530 1220L1540 1280L1530 1400L1510 1568M710 1490L718 1530L700 1568"/>
        </g>
        <g transform="translate(1880 480) scale(.5995 .4592)">
          <path vector-effect="non-scaling-stroke" d="M0 540L60 530L120 518L140 530L130 580L110 620L115 690L130 775L150 810L110 865L150 920L175 950L185 1025L230 1070L280 1045L290 1080L330 1050L350 1020L395 990L405 950L450 930L450 910L405 905L385 840L390 790L345 725L375 740L400 760L460 755L490 795L500 755L540 740L590 720L640 690L660 655L602 555L620 530L615 485L680 460L685 435L655 400L665 365L725 325L708 300M660 630L700 630L705 690L740 740L710 830L715 890L730 960L795 1027L830 1010L840 990L880 985L910 950L1015 965L1005 905L1050 900L1090 890L1145 935L1185 915L1245 930L1275 880L1310 790L1342 735"/>
          <path vector-effect="non-scaling-stroke" d="M920 550L915 630L865 660V700L855 740L880 790L900 820M1163 575L1130 640L1130 720L1160 770V830M0 973H80L85 950L100 965L150 935L165 1010L185 1025M0 1040L10 1085"/>
          <path vector-effect="non-scaling-stroke" stroke-width="2.5" stroke-dasharray="9 7" stroke="#8f7a94" d="M905 860L870 900L860 968L840 970M915 840L965 945M1150 835L1130 915M1160 860L1155 925"/>
        </g>
        <g transform="translate(960 1200) scale(.5931 .4592)">
          <path vector-effect="non-scaling-stroke" d="M840 0L830 45L800 70L770 55L760 20L720 5L695 15M1505 0L1480 8L1430 5L1360 30L1280 90L1270 140L1250 180L1258 220L1215 260L1210 300L1195 330L1215 370L1245 440L1270 475L1255 515L1320 525L1330 572H1400L1455 520L1450 675L1475 682L1500 668H1568M1530 670L1568 745M1568 1020L1550 1075L1562 1110L1550 1160L1568 1200M1568 1260L1530 1320L1540 1370L1510 1370"/>
        </g>
        <g transform="translate(1880 1200) scale(.5995 .4592)">
          <path vector-effect="non-scaling-stroke" d="M0 668L45 690L80 670L95 640L120 640L145 610L170 605L205 565L250 552L290 550L300 545L305 580L295 620L305 690L308 740L340 780L390 825L425 822L460 845L490 870L545 893L568 930H630L670 960L675 1000L690 1090L668 1100L688 1130L692 1213H833L823 1260L830 1300L870 1340L885 1400L875 1516M0 705L30 770L48 830L30 870L38 910L20 945L35 1000L10 1040L5 1070L15 1120M35 1220L0 1280L0 1370L30 1440L40 1516"/>
        </g>
      </g>

      <!-- labels -->
      <g font-family="Liberation Serif, serif" font-weight="bold" fill="#4d4d4d" font-size="21" stroke="#f7f7f2" stroke-opacity=".7" stroke-width="3" paint-order="stroke">
        <text x="1133" y="522" textLength="74">COSTA</text><text x="1143" y="546" textLength="55">RICA</text>
        <text x="1294" y="630" textLength="98">PANAMA</text>
        <text x="1610" y="879" font-size="28" textLength="224">COLOMBIA</text>
        <text x="1402" y="1080" textLength="131">ECUADOR</text>
        <text x="1935" y="671" font-size="26" textLength="193">VENEZUELA</text>
        <text x="2291" y="792" textLength="111">GUYANA</text><text x="2416" y="826" textLength="144">SURINAME</text>
        <text x="2584" y="840" textLength="90">FRENCH</text><text x="2581" y="864" textLength="93">GUIANA</text>
        <text x="1521" y="1345" font-size="30" textLength="104">PERÚ</text>
        <text x="2063" y="1757" font-size="28" textLength="180">BOLIVIA</text>
        <text x="2635" y="1528" font-size="37" textLength="146">BRAZI</text>
      </g>
      <g font-family="Liberation Sans, sans-serif" fill="#3f3f3f" font-size="22" stroke="#fff" stroke-opacity=".8" stroke-width="4" paint-order="stroke">
        <text x="1106" y="574" textLength="101">San Jose</text><text x="1308" y="587" textLength="141">Panama City</text>
        <text x="1527" y="552" textLength="112">Cartagena</text><text x="1739" y="540" textLength="112">Maracaibo</text>
        <text x="1545" y="676" textLength="151">Bucaramanga</text><text x="1493" y="722" textLength="92">Medellin</text>
        <text x="1664" y="786" textLength="77">Bogota</text><text x="1553" y="840" textLength="41">Cali</text>
        <text x="1473" y="1027" textLength="56">Quito</text><text x="1277" y="1106" textLength="109">Guayaquil</text>
        <text x="1992" y="515" textLength="89">Caracas</text><text x="1953" y="556" textLength="94">Valencia</text>
        <text x="2235" y="508" textLength="62">Spain</text><text x="2355" y="686" textLength="133">Georgetown</text>
        <text x="2492" y="730" textLength="127">Paramaribo</text><text x="2665" y="776" textLength="91">Cayenne</text>
        <text x="2303" y="1138" textLength="84">Manaus</text><text x="1295" y="1316" textLength="94">Chiclayo</text>
        <text x="1424" y="1364" textLength="71">Trujillo</text><text x="1528" y="1548" textLength="54">Lima</text>
        <text x="2024" y="1797" textLength="144">Cochabamba</text><text x="2076" y="1903" textLength="62">Sucre</text>
      </g>
      <g fill="#fff" stroke="#777" stroke-width="2.4">
        <circle cx="1207" cy="551" r="4.8"/><circle cx="1415" cy="598" r="4.8"/><circle cx="1629" cy="503" r="4.8"/><circle cx="1597" cy="529" r="4.8"/><circle cx="1775" cy="518" r="4.8"/><circle cx="1705" cy="681" r="4.8"/><circle cx="1595" cy="721" r="4.8"/><circle cx="1663" cy="795" r="4.8"/><circle cx="1551" cy="849" r="4.8"/><circle cx="1461" cy="1015" r="4.8"/><circle cx="1398" cy="1104" r="4.8"/>
        <circle cx="1991" cy="525" r="4.8"/><circle cx="1943" cy="543" r="4.8"/><circle cx="2235" cy="518" r="4.8"/><circle cx="2387" cy="695" r="4.8"/><circle cx="2523" cy="742" r="4.8"/><circle cx="2653" cy="782" r="4.8"/><circle cx="2303" cy="1149" r="4.8"/><circle cx="1401" cy="1315" r="4.8"/><circle cx="1437" cy="1378" r="4.8"/><circle cx="1529" cy="1559" r="4.8"/><circle cx="2023" cy="1809" r="4.8"/><circle cx="2065" cy="1890" r="4.8"/><circle cx="2792" cy="1777" r="4.8"/>
      </g>
      <g font-family="Liberation Sans, sans-serif" font-style="italic" fill="#6f9cb8" font-size="20">
        <path id="magdalena" d="M1657 574Q1682 592 1682 662" fill="none"/><text font-size="18"><textPath href="#magdalena" textLength="92">Magdelena</textPath></text>
        <text x="1867" y="890" textLength="54" transform="rotate(-2 1867 890)">Negro</text>
        <text textLength="58" transform="translate(1556 944) rotate(22)">Japura</text>
        <text textLength="86" transform="translate(1784 1102) rotate(20)">Putumayo</text>
        <text textLength="70" transform="translate(2103 635) rotate(-13)">Orinoco</text>
        <text textLength="66" transform="translate(2250 924) rotate(-66)">Branco</text>
        <text textLength="62" transform="translate(1885 956) rotate(48)">Vaupes</text>
        <text textLength="56" transform="translate(2184 1044) rotate(25)">Negro</text>
        <text textLength="59" transform="translate(1979 1081) rotate(-4)">Japura</text>
        <text textLength="71" transform="translate(2000 1108) rotate(11)">Amazon</text>
        <text textLength="78" transform="translate(1505 1206) rotate(17)">Maranon</text>
        <text textLength="64" transform="translate(1711 1616) rotate(22)">Ucayali</text>
        <text x="1855" y="1732" font-size="22" textLength="48">Lake</text><text x="1841" y="1752" font-size="22" textLength="78">Titicaca</text>
        <text textLength="51" transform="translate(1981 1348) rotate(-4)">Purus</text>
        <text textLength="66" transform="translate(2372 1306) rotate(-42)">Tapajos</text>
        <text textLength="72" transform="translate(2057 1441) rotate(-31)">Madeira</text>
        <text textLength="40" transform="translate(1982 1541) rotate(-40)">Beni</text>
        <path id="guapore" d="M2080 1552Q2105 1572 2156 1578" fill="none"/><text><textPath href="#guapore" textLength="76">Guapore</textPath></text>
        <text textLength="98" transform="translate(2430 1412) rotate(31)">Teles Pires</text>
        <text textLength="72" transform="translate(2354 1673) rotate(-70)">Juruena</text>
        <text textLength="53" transform="translate(2535 1695) rotate(-28)">Xingu</text>
        <text textLength="76" transform="translate(2619 1781) rotate(-51)">Araguaia</text>
        <text textLength="84" transform="translate(2492 1770) rotate(-8)">Paraguay</text>
        <text textLength="60" transform="translate(2752 1862) rotate(-6)">Parana</text>
      </g>
      <g font-family="Liberation Sans, sans-serif" font-style="italic" fill="#868680" font-size="24">
        <path id="guiana" d="M1968 801Q2210 815 2464 874" fill="none"/><text xml:space="preserve"><textPath href="#guiana" textLength="490">GUIANA HIGHLANDS</textPath></text>
        <text x="1883" y="1212" font-size="25" textLength="570">AMAZON BASIN</text>
        <path id="andes" d="M1628 1608Q1690 1678 1770 1716" fill="none"/><text font-style="normal" font-size="25" fill="#777"><textPath href="#andes" textLength="168">ANDES</textPath></text>
        <text x="2232" y="1544" font-size="20" textLength="266">MATO GROSSO</text><text x="2291" y="1574" font-size="20" textLength="160">PLATEAU</text>
        <text x="1908" y="1866" font-size="20" textLength="156">ALTIPLANO</text>
      </g>

      <!-- occurrence points -->
      <g fill="#f00" fill-opacity=".18" stroke="#ff1a1a" stroke-opacity=".5" stroke-width="4">
        <circle cx="1668" cy="594" r="10"/><circle cx="1750" cy="632" r="10"/><circle cx="1692" cy="686" r="10"/><circle cx="1690" cy="706" r="10"/><circle cx="1692" cy="816" r="10"/>
        <circle cx="1502" cy="1031" r="10"/><circle cx="1502" cy="1035" r="10"/><circle cx="1502" cy="1037" r="10"/>
        <circle cx="1480" cy="1056" r="10"/><circle cx="1488" cy="1054" r="10"/><circle cx="1516" cy="1054" r="10"/><circle cx="1542" cy="1056" r="10"/><circle cx="1508" cy="1084" r="10"/><circle cx="1532" cy="1100" r="10"/><circle cx="1398" cy="1104" r="10"/>
        <circle cx="1478" cy="1126" r="10"/><circle cx="1480" cy="1130" r="10"/><circle cx="1474" cy="1164" r="10"/><circle cx="1640" cy="1158" r="10"/><circle cx="1688" cy="1178" r="10"/>
        <circle cx="1476" cy="1208" r="10"/><circle cx="1477" cy="1210" r="10"/><circle cx="1476" cy="1211" r="10"/>
        <circle cx="1682" cy="1346" r="10"/><circle cx="1766" cy="1364" r="10"/><circle cx="1638" cy="1386" r="10"/><circle cx="1636" cy="1410" r="10"/><circle cx="1596" cy="1466" r="10"/><circle cx="1600" cy="1482" r="10"/><circle cx="1606" cy="1512" r="10"/><circle cx="1816" cy="1572" r="10"/>
        <circle cx="1872" cy="1560" r="10"/><circle cx="1872" cy="1560" r="10"/><circle cx="1879" cy="1596" r="10"/><circle cx="1879" cy="1596" r="10"/><circle cx="1890" cy="1602" r="10"/><circle cx="2086" cy="1796" r="10"/>
        <circle cx="1956" cy="760" r="10"/><circle cx="2064" cy="904" r="10"/><circle cx="2356" cy="790" r="10"/><circle cx="2356" cy="790" r="10"/><circle cx="2356" cy="790" r="10"/><circle cx="2364" cy="794" r="10"/>
      </g>
    </svg>

    <div class="absolute left-[20px] top-[20px] w-[68px] h-[128px] rounded-[8px] border-4 border-black/20 bg-clip-padding bg-white flex flex-col">
      <div class="h-[60px] pt-[10px] pl-px border-b-2 border-[#ccc] flex items-center justify-center"><svg class="w-6 h-6" viewBox="0 0 24 24"><path d="M0 12H24M12 0V24" stroke="#000" stroke-width="4"/></svg></div>
      <div class="h-[60px] pt-2 pl-px flex items-center justify-center"><svg class="w-6 h-6" viewBox="0 0 24 24"><path d="M0 12H24" stroke="#000" stroke-width="4"/></svg></div>
    </div>
    <div class="absolute left-[1511px] top-[6px] w-[299px] h-[76px] flex justify-between border-2 border-[#ccc] rounded-[8px] bg-white pl-[23px] pr-[34px] leading-[72px]"><span data-w="128">ESRI Topo</span><svg class="mt-[30px] w-5 h-[10px]" viewBox="0 0 20 10"><path d="M0 0H20L10 10Z" fill="#333"/></svg></div>
    <div class="absolute left-0 bottom-0 w-[1820px] h-[66px] bg-white/70 px-[10px] text-[22px] leading-[33px] font-['Liberation_Sans',sans-serif]">
      <div class="flex"><a class="w-[71px] text-[#0078A8]"><span data-w="66">Leaflet</span></a><span data-w="1686">| Tiles © Esri — Esri, DeLorme, NAVTEQ, TomTom, Intermap, iPC, USGS, FAO, NPS, NRCAN, GeoBase, Kadaster NL, Ordnance Survey, Esri Japan, METI, Esri China (Hong</span></div>
      <div><span data-w="358">Kong), and the GIS User Community</span></div>
    </div>
  </div>
</main>
</div>
<script>
  function fitLabels() {
    document.querySelectorAll('[data-w]').forEach(function (el) {
      el.style.letterSpacing = '0px';
      var range = document.createRange();
      range.selectNodeContents(el);
      var natural = range.getBoundingClientRect().width;
      el.style.letterSpacing = ((el.dataset.w - natural) / el.textContent.length).toFixed(3) + 'px';
    });
  }
  fitLabels();
  window.addEventListener('load', function () {
    fitLabels();
    requestAnimationFrame(fitLabels);
    setTimeout(fitLabels, 100);
  });
  new MutationObserver(fitLabels).observe(document.head, { childList: true, subtree: true });
</script>
</body>
</html>
